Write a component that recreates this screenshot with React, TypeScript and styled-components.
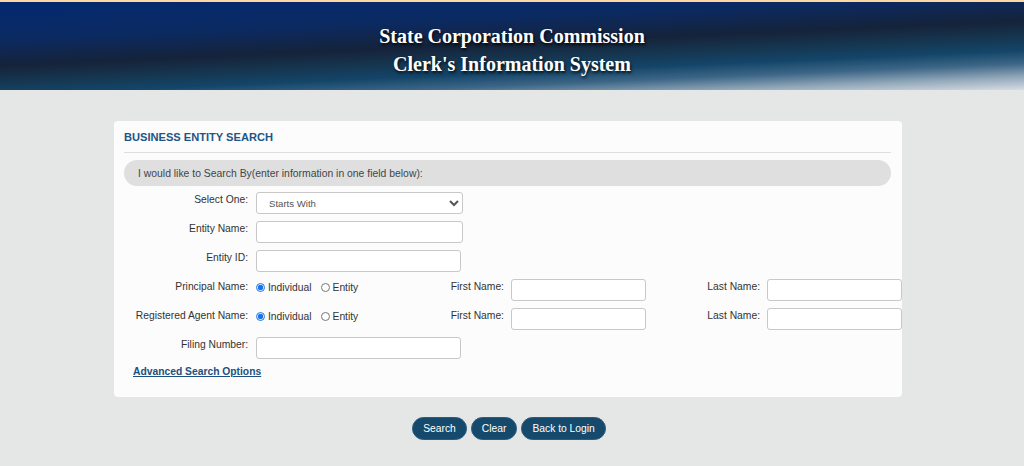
import styled, { createGlobalStyle } from 'styled-components';

const GlobalStyle = createGlobalStyle`
  html, body {
    margin: 0;
    padding: 0;
    background: #e5e6e6;
    font-family: "Liberation Sans", Arial, sans-serif;
  }
`;

const Header = styled.header`
  height: 88px;
  box-sizing: content-box;
  border-top: 2px solid #fdd7a4;
  background: linear-gradient(
    177.5deg,
    #03296f 0%,
    #0b2a62 28%,
    #15233a 48%,
    #163650 60%,
    #134569 70%,
    #3d6686 80%,
    #91a7b9 90%,
    #d6dce3 100%
  );
  display: flex;
  flex-direction: column;
  align-items: center;
  padding-top: 0;
  gap: 6px;
`;

const HeaderLine = styled.div`
  font-family: "Liberation Serif", "Times New Roman", serif;
  font-weight: bold;
  font-size: 20px;
  line-height: 22px;
  color: #ffffff;
  text-shadow: 1px 2px 3px rgba(0, 0, 0, 0.85);

  &:first-child {
    margin-top: 23px;
  }
`;

const Main = styled.main`
  width: 788px;
  margin: 31px 0 0 114px;
`;

const Card = styled.section`
  background: #fcfcfc;
  border-radius: 4px;
  padding: 0 11px 18px 10px;
`;

const Title = styled.h2`
  margin: 0;
  padding: 9px 0 8px;
  font-size: 11.1px;
  line-height: 14px;
  font-weight: bold;
  color: #225586;
  border-bottom: 1px solid #dedede;
`;

const Hint = styled.div`
  margin-top: 7px;
  height: 26px;
  border-radius: 13px;
  background: #dfdfe0;
  padding-left: 14px;
  display: flex;
  align-items: center;
  font-size: 10.4px;
  color: #444;
`;

const Form = styled.div`
  margin-top: 6px;
  display: flex;
  flex-direction: column;
  gap: 7px;
`;

const Row = styled.div`
  display: flex;
  align-items: flex-start;
  height: 22px;
`;

const Label = styled.label`
  flex: 0 0 124px;
  margin-right: 8px;
  text-align: right;
  font-size: 10.3px;
  line-height: 15px;
  color: #333;
`;

const SubLabel = styled.label<{ $w: number }>`
  flex: 0 0 ${p => p.$w}px;
  margin-right: 7px;
  text-align: right;
  font-size: 10.3px;
  line-height: 15px;
  color: #333;
`;

const TextInput = styled.input<{ $w: number }>`
  flex: 0 0 auto;
  box-sizing: border-box;
  width: ${p => p.$w}px;
  height: 22px;
  margin: 0;
  border: 1px solid #c8c8c8;
  border-radius: 3px;
  background: #fff;
  font-family: inherit;
  font-size: 11px;
  padding: 0 8px;
`;

const Select = styled.select`
  box-sizing: border-box;
  width: 207px;
  height: 22px;
  margin: 0;
  border: 1px solid #c8c8c8;
  border-radius: 3px;
  background: #fff;
  font-family: inherit;
  font-size: 9.6px;
  color: #555;
  padding: 0 6px 0 8px;
`;

const RadioGroup = styled.div`
  flex: 0 0 188px;
  display: flex;
  align-items: center;
  height: 17px;
  font-size: 10.3px;
  color: #333;
`;

const Radio = styled.input`
  width: 9px;
  height: 9px;
  margin: 0 3px 0 0;
  accent-color: #1a73e8;
`;

const RadioText = styled.span`
  margin-right: 9px;
`;

const AdvancedLink = styled.a`
  display: inline-block;
  margin: 6px 0 0 9px;
  font-size: 10.3px;
  line-height: 14px;
  font-weight: bold;
  color: #21507f;
  text-decoration: underline;
  cursor: pointer;
`;

const Actions = styled.div`
  display: flex;
  justify-content: center;
  gap: 4px;
  margin-top: 20px;
  padding-left: 2px;
`;

const PillButton = styled.button`
  height: 23px;
  padding: 0 10px;
  border: 1px solid #2b5b7e;
  border-radius: 12px;
  background: #164a6c;
  color: #fff;
  font-family: inherit;
  font-size: 10.3px;
  cursor: pointer;
`;

const NameRow = ({ label }: { label: string }) => (
  <Row>
    <Label>{label}</Label>
    <RadioGroup>
      <Radio type="radio" name={label} defaultChecked />
      <RadioText>Individual</RadioText>
      <Radio type="radio" name={label} />
      <RadioText>Entity</RadioText>
    </RadioGroup>
    <SubLabel $w={60}>First Name:</SubLabel>
    <TextInput $w={135} />
    <SubLabel $w={114}>Last Name:</SubLabel>
    <TextInput $w={135} />
  </Row>
);

export default function App() {
  return (
    <>
      <GlobalStyle />
      <Header>
        <HeaderLine>State Corporation Commission</HeaderLine>
        <HeaderLine>Clerk's Information System</HeaderLine>
      </Header>
      <Main>
        <Card>
          <Title>BUSINESS ENTITY SEARCH</Title>
          <Hint>I would like to Search By(enter information in one field below):</Hint>
          <Form>
            <Row>
              <Label>Select One:</Label>
              <Select defaultValue="starts">
                <option value="starts">Starts With</option>
                <option value="contains">Contains</option>
                <option value="exact">Exact Match</option>
              </Select>
            </Row>
            <Row>
              <Label>Entity Name:</Label>
              <TextInput $w={207} />
            </Row>
            <Row>
              <Label>Entity ID:</Label>
              <TextInput $w={205} />
            </Row>
            <NameRow label="Principal Name:" />
            <NameRow label="Registered Agent Name:" />
            <Row>
              <Label>Filing Number:</Label>
              <TextInput $w={205} />
            </Row>
          </Form>
          <AdvancedLink>Advanced Search Options</AdvancedLink>
        </Card>
        <Actions>
          <PillButton>Search</PillButton>
          <PillButton>Clear</PillButton>
          <PillButton>Back to Login</PillButton>
        </Actions>
      </Main>
    </>
  );
}
